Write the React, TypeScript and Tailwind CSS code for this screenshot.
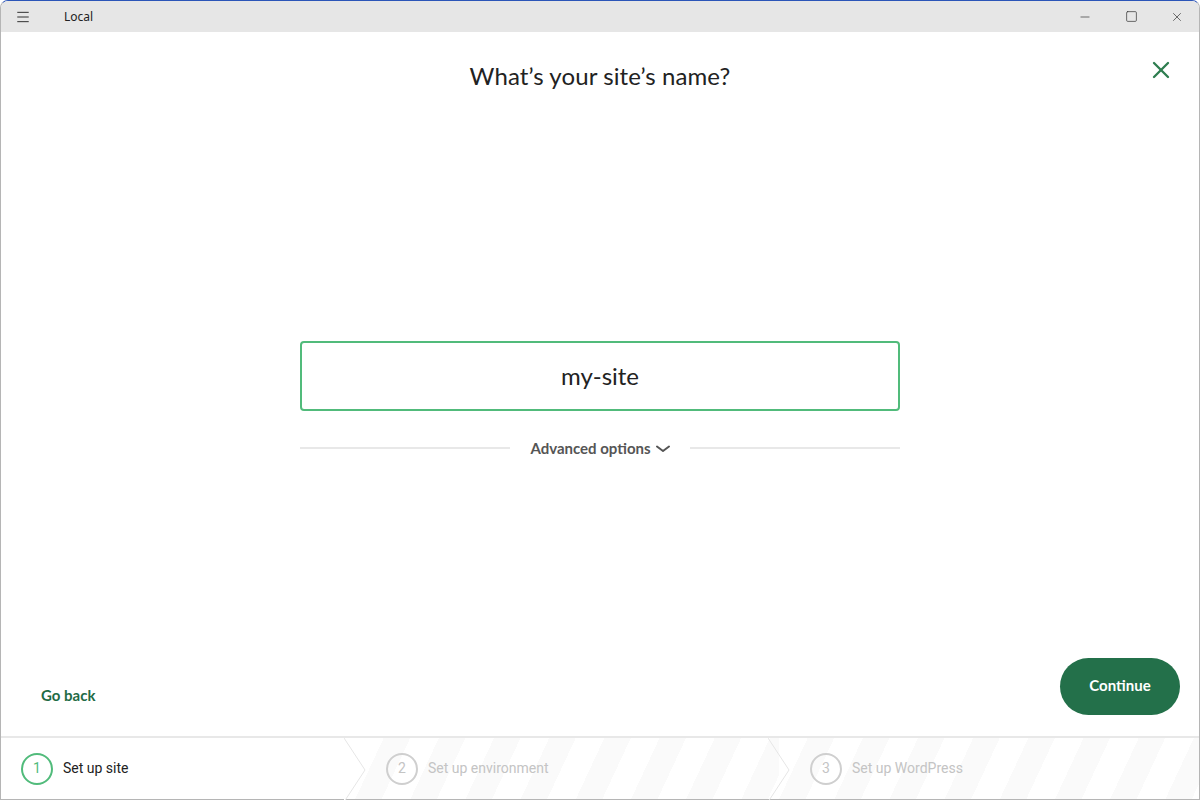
import { Menu, Minus, Square, X } from 'lucide-react';

const stripes =
  'bg-[repeating-linear-gradient(115deg,#ffffff_0px,#ffffff_26px,#fafafa_26px,#fafafa_50px)]';

function Chevron() {
  return (
    <svg width="22" height="64" viewBox="0 0 22 64" className="absolute -right-[11px] top-0 z-10">
      <path d="M0 0 L21 32 L0 64 Z" fill="#ffffff" />
      <path d="M0 0 L21 32 L0 64" fill="none" stroke="#e6e6e6" strokeWidth="1" />
    </svg>
  );
}

function Step({ n, label, active }: { n: number; label: string; active?: boolean }) {
  return (
    <div className="flex items-center gap-[10px]">
      <div
        className={`w-8 h-8 rounded-full border-2 flex items-center justify-center text-[14px] ${
          active ? 'border-[#51bb7b] text-[#51bb7b]' : 'border-[#cfcfcf] text-[#c4c4c4]'
        }`}
      >
        {n}
      </div>
      <span className={`text-[14px] ${active ? 'text-[#222]' : 'text-[#c4c4c4]'}`}>{label}</span>
    </div>
  );
}

export default function App() {
  return (
    <div className="w-[1200px] h-[800px] flex flex-col bg-white border-t border-t-[#2b55b8] border-l border-l-[#b5b5b5] border-r border-r-[#b5b5b5] rounded-tl-[8px] rounded-tr-[8px] overflow-hidden font-['Lato',sans-serif]">
      {/* Title bar */}
      <div className="h-[31px] bg-[#e6e6e6] flex items-center shrink-0">
        <div className="w-[44px] flex justify-center">
          <Menu className="w-[16px] h-[16px] text-[#222]" strokeWidth={1.4} />
        </div>
        <span className="ml-[19px] text-[12px] text-[#222] font-['Noto_Sans',sans-serif]">Local</span>
        <div className="ml-auto flex h-full pr-[1px]">
          <div className="w-[46px] flex items-center justify-center pl-[4px]">
            <Minus className="w-[14px] h-[14px] text-[#333]" strokeWidth={1.2} />
          </div>
          <div className="w-[46px] flex items-center justify-center pl-[4px]">
            <Square className="w-[13px] h-[13px] text-[#333]" strokeWidth={1.3} />
          </div>
          <div className="w-[46px] flex items-center justify-center pl-[4px]">
            <X className="w-[14px] h-[14px] text-[#333]" strokeWidth={1.2} />
          </div>
        </div>
      </div>

      {/* Main */}
      <div className="flex-1 flex flex-col">
        <div className="relative flex justify-center pt-[28px]">
          <h1 className="text-[24px] leading-[32px] text-[#222] tracking-[0.1px]">What’s your site’s name?</h1>
          <button className="absolute right-[24px] top-[24px] text-[#2e7d50]">
            <X className="w-[28px] h-[28px]" strokeWidth={2} />
          </button>
        </div>

        <div className="mt-[249px] flex flex-col items-center">
          <div className="w-[600px] h-[70px] border-2 border-[#51bb7b] rounded-[4px] flex items-center justify-center">
            <span className="text-[24px] text-[#222]">my-site</span>
          </div>
          <div className="w-[600px] mt-[26px] flex items-center">
            <div className="flex-1 h-[2px] bg-[#e8e8e8]" />
            <span className="px-[20px] text-[15px] font-bold text-[#555] flex items-center gap-[5px]">
              Advanced options
              <svg width="14" height="8" viewBox="0 0 14 8" className="mt-[1px]">
                <path d="M1 1.5 L7 6 L13 1.5" fill="none" stroke="#555" strokeWidth="2" strokeLinecap="round" strokeLinejoin="round" />
              </svg>
            </span>
            <div className="flex-1 h-[2px] bg-[#e8e8e8]" />
          </div>
        </div>

        <div className="mt-auto flex items-end justify-between pl-[40px] pr-[19px] pb-[21px]">
          <button className="text-[15px] font-bold text-[#1f6b45] pb-[9px]">Go back</button>
          <button className="w-[120px] h-[57px] rounded-full bg-[#23704a] text-white text-[15px] font-bold pb-[2px]">
            Continue
          </button>
        </div>
      </div>

      {/* Steps */}
      <div className="h-[64px] shrink-0 border-t-2 border-t-[#e8e8e8] border-b border-b-[#b5b5b5] flex font-['Roboto',sans-serif]">
        <div className="relative w-[354px] bg-white flex items-center pl-[20px]">
          <Step n={1} label="Set up site" active />
          <Chevron />
        </div>
        <div className={`relative w-[424px] flex items-center pl-[31px] ${stripes}`}>
          <Step n={2} label="Set up environment" />
          <svg width="22" height="64" viewBox="0 0 22 64" className="absolute -right-[11px] top-0 z-10">
            <path d="M0 0 L21 32 L0 64" fill="none" stroke="#e6e6e6" strokeWidth="1" />
          </svg>
        </div>
        <div className={`flex-1 flex items-center pl-[31px] ${stripes}`}>
          <Step n={3} label="Set up WordPress" />
        </div>
      </div>
    </div>
  );
}
